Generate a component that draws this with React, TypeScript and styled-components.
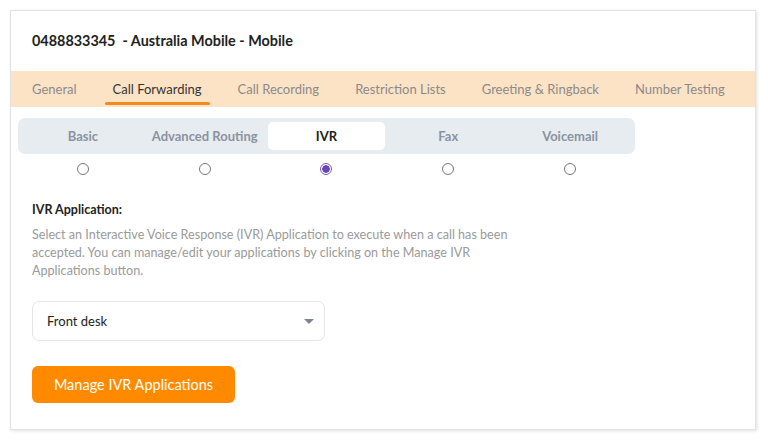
import { useState } from "react";
import styled, { createGlobalStyle } from "styled-components";

const GlobalStyle = createGlobalStyle`
  html, body {
    margin: 0;
    padding: 0;
    background: #ffffff;
    font-family: Lato, "Open Sans", sans-serif;
  }
`;

const tabs = [
  "General",
  "Call Forwarding",
  "Call Recording",
  "Restriction Lists",
  "Greeting & Ringback",
  "Number Testing",
];

const modes = ["Basic", "Advanced Routing", "IVR", "Fax", "Voicemail"];

const App = () => {
  const [tab, setTab] = useState(1);
  const [mode, setMode] = useState(2);

  return (
    <Page>
      <GlobalStyle />
      <Card>
        <Title>0488833345&nbsp; - Australia Mobile - Mobile</Title>
        <TabBar>
          {tabs.map((t, i) => (
            <Tab key={t} $active={i === tab} onClick={() => setTab(i)}>
              {t}
            </Tab>
          ))}
        </TabBar>
        <Body>
          <ModeBlock>
            <Segments>
              {modes.map((m, i) => (
                <Segment key={m} $active={i === mode} onClick={() => setMode(i)}>
                  {m}
                </Segment>
              ))}
            </Segments>
            <Radios>
              {modes.map((m, i) => (
                <RadioCell key={m}>
                  <Radio $checked={i === mode} onClick={() => setMode(i)} />
                </RadioCell>
              ))}
            </Radios>
          </ModeBlock>
          <Section>
            <Label>IVR Application:</Label>
            <Help>
              Select an Interactive Voice Response (IVR) Application to execute when a call has been
              accepted. You can manage/edit your applications by clicking on the Manage IVR
              Applications button.
            </Help>
            <Select>
              <span>Front desk</span>
              <Caret />
            </Select>
            <Button>Manage IVR Applications</Button>
          </Section>
        </Body>
      </Card>
    </Page>
  );
};

const Page = styled.div`
  padding: 10px 12px 10px 10px;
  width: 768px;
  height: 440px;
  box-sizing: border-box;
`;

const Card = styled.div`
  width: 746px;
  height: 420px;
  box-sizing: border-box;
  background: #fff;
  border: 1px solid #e2e2e2;
  box-shadow: 1px 1px 3px rgba(0, 0, 0, 0.12);
  display: flex;
  flex-direction: column;
`;

const Title = styled.div`
  padding: 21px 21px 0;
  height: 60px;
  box-sizing: border-box;
  font-size: 14.4px;
  font-weight: 700;
  color: #222;
`;

const TabBar = styled.div`
  display: flex;
  background: #fde3c6;
  height: 36px;
  padding-left: 21px;
  gap: 20px;
`;

const Tab = styled.div<{ $active?: boolean }>`
  position: relative;
  display: flex;
  align-items: center;
  padding: 0 8px;
  white-space: nowrap;
  font-size: 13px;
  color: ${(p) => (p.$active ? "#333" : "#8a8a8a")};
  cursor: pointer;
  &:first-child {
    padding-left: 0;
  }
  &::after {
    content: "";
    display: ${(p) => (p.$active ? "block" : "none")};
    position: absolute;
    left: 0;
    right: 0;
    bottom: 2px;
    height: 3px;
    border-radius: 2px;
    background: #f58a1f;
  }
`;

const Body = styled.div`
  padding: 11px 0 0 7px;
`;

const ModeBlock = styled.div`
  width: 617px;
`;

const Segments = styled.div`
  display: grid;
  grid-template-columns: repeat(5, 1fr);
  padding: 4px;
  height: 36px;
  box-sizing: border-box;
  background: #e7ecf1;
  border-radius: 7px;
`;

const Segment = styled.div<{ $active?: boolean }>`
  display: flex;
  align-items: center;
  justify-content: center;
  margin: 0 2px;
  border-radius: 5px;
  font-size: 13px;
  font-weight: 700;
  color: ${(p) => (p.$active ? "#222" : "#8b93a0")};
  background: ${(p) => (p.$active ? "#fff" : "transparent")};
  cursor: pointer;
`;

const Radios = styled.div`
  display: grid;
  grid-template-columns: repeat(5, 1fr);
  padding: 9px 4px 0;
`;

const RadioCell = styled.div`
  display: flex;
  justify-content: center;
`;

const Radio = styled.span<{ $checked?: boolean }>`
  width: 12px;
  height: 12px;
  box-sizing: border-box;
  border-radius: 50%;
  border: 1px solid ${(p) => (p.$checked ? "#7b5cc4" : "#777")};
  background: ${(p) => (p.$checked ? "radial-gradient(circle, #6a44b8 0 3.5px, #fff 4px)" : "#fff")};
  cursor: pointer;
`;

const Section = styled.div`
  padding: 27px 0 0 14px;
  display: flex;
  flex-direction: column;
  align-items: flex-start;
`;

const Label = styled.div`
  font-size: 12.5px;
  font-weight: 700;
  color: #222;
`;

const Help = styled.p`
  margin: 9px 0 0;
  width: 485px;
  font-size: 12.6px;
  line-height: 18px;
  color: #9a9a9a;
`;

const Select = styled.div`
  margin-top: 21px;
  width: 293px;
  height: 40px;
  box-sizing: border-box;
  border: 1px solid #e6e6e6;
  border-radius: 7px;
  display: flex;
  align-items: center;
  justify-content: space-between;
  padding: 0 10px 0 14px;
  font-size: 13px;
  color: #222;
`;

const Caret = styled.span`
  width: 0;
  height: 0;
  border-left: 5px solid transparent;
  border-right: 5px solid transparent;
  border-top: 5px solid #7a8494;
`;

const Button = styled.button`
  margin-top: 25px;
  width: 203px;
  height: 37px;
  border: none;
  border-radius: 6px;
  background: #ff8a00;
  color: #fff;
  font-family: Lato, "Open Sans", sans-serif;
  font-size: 14.5px;
  cursor: pointer;
`;

export default App;
